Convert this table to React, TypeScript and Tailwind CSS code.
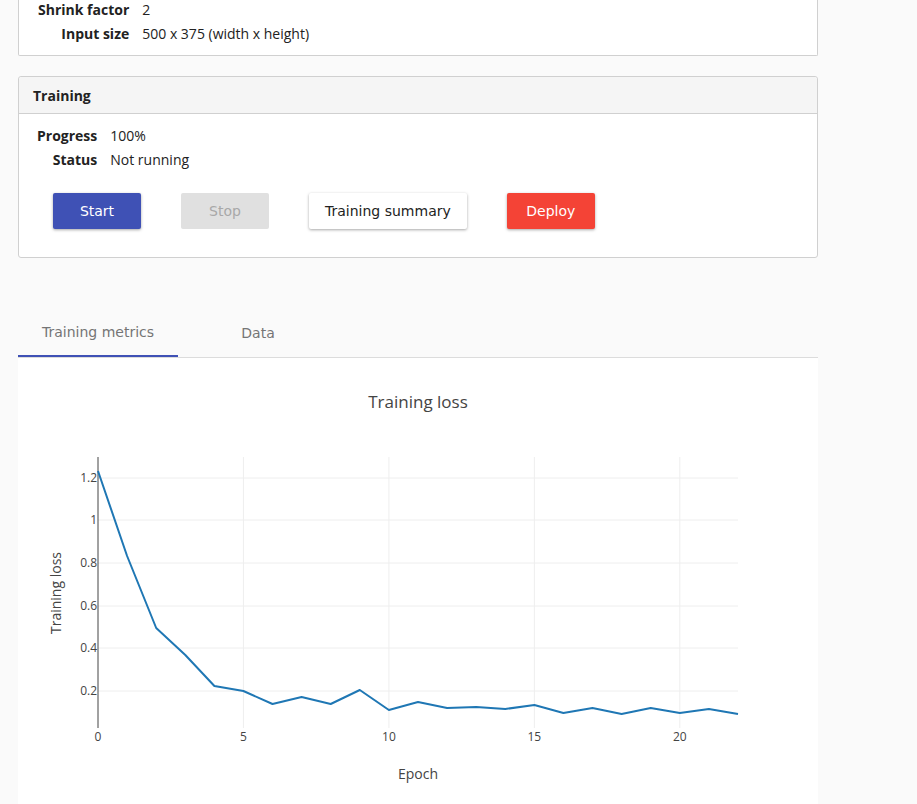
import React from "react";

const pts: [number, number][] = [
  [0, 470], [1, 555], [2, 627], [3, 654], [4, 685], [5, 690], [6, 703], [7, 696],
  [8, 703], [9, 689], [10, 709], [11, 701], [12, 707], [13, 706], [14, 708],
  [15, 704], [16, 712], [17, 707], [18, 713], [19, 707], [20, 712], [21, 708], [22, 713],
];

const OX = 18;
const OY = 357;
const xPix = (e: number) => 98 + e * 29.09;

function Chart() {
  const yTicks: [string, number][] = [
    ["1.2", 477], ["1", 519], ["0.8", 562], ["0.6", 605], ["0.4", 647], ["0.2", 690],
  ];
  const xTicks = [0, 5, 10, 15, 20];
  const path = pts
    .map(([e, y], i) => `${i === 0 ? "M" : "L"}${(xPix(e) - OX).toFixed(1)},${(y - OY).toFixed(1)}`)
    .join(" ");
  return (
    <svg width={800} height={447} className="block" style={{ fontFamily: '"Open Sans", verdana, arial, sans-serif' }}>
      <text x={418 - OX} y={407 - OY} textAnchor="middle" fontSize={17} fill="#444">
        Training loss
      </text>
      {xTicks.slice(1).map((t) => (
        <line key={t} x1={xPix(t) - OX} x2={xPix(t) - OX} y1={456 - OY} y2={727 - OY} stroke="#eee" strokeWidth={1} />
      ))}
      {yTicks.map(([l, y]) => (
        <line key={l} x1={98 - OX} x2={738 - OX} y1={y - OY} y2={y - OY} stroke="#eee" strokeWidth={1} />
      ))}
      <line x1={98 - OX} x2={98 - OX} y1={456 - OY} y2={727 - OY} stroke="#444" strokeWidth={1} />
      <path d={path} fill="none" stroke="#1f77b4" strokeWidth={2} strokeLinejoin="round" />
      {yTicks.map(([l, y]) => (
        <text key={l} x={97 - OX} y={y - OY + 4} textAnchor="end" fontSize={12} fill="#444">
          {l}
        </text>
      ))}
      {xTicks.map((t) => (
        <text key={t} x={xPix(t) - OX} y={740 - OY} textAnchor="middle" fontSize={12} fill="#444">
          {t}
        </text>
      ))}
      <text x={418 - OX} y={778 - OY} textAnchor="middle" fontSize={14} fill="#444">
        Epoch
      </text>
      <text
        x={0}
        y={0}
        textAnchor="middle"
        fontSize={14}
        fill="#444"
        transform={`translate(${61 - OX},${592 - OY}) rotate(-90)`}
      >
        Training loss
      </text>
    </svg>
  );
}

export default function App() {
  const btn = "h-9 min-w-[88px] px-4 rounded-[2px] text-[14px] flex items-center justify-center";
  return (
    <div
      className="min-h-[804px] bg-[#fafafa] pl-[18px] text-[14px] text-[#222]"
      style={{ fontFamily: '"Open Sans", sans-serif' }}
    >
      <div className="w-[800px]">
        {/* Top card */}
        <div className="bg-white border border-t-0 border-[#d0d0d0] rounded-b-[2px] pl-[19px] pb-[9px] -mt-[2px]">
          <div className="grid grid-cols-[max-content_1fr] gap-x-[13px] leading-[24px]">
            <div className="text-right font-bold">Shrink factor</div>
            <div>2</div>
            <div className="text-right font-bold">Input size</div>
            <div>500 x 375 (width x height)</div>
          </div>
        </div>

        {/* Training card */}
        <div className="mt-[20px] bg-white border border-[#d0d0d0] rounded-[3px]">
          <div className="h-[37px] bg-[#f5f5f5] border-b border-[#d0d0d0] flex items-center pl-[14px] font-bold rounded-t-[3px]">
            Training
          </div>
          <div className="pt-[10px] pb-[28px]">
            <div className="grid grid-cols-[max-content_1fr] gap-x-[13px] leading-[24px] pl-[18px]">
              <div className="text-right font-bold">Progress</div>
              <div>100%</div>
              <div className="text-right font-bold">Status</div>
              <div>Not running</div>
            </div>
            <div
              className="flex gap-10 pl-[34px] mt-[21px]"
              style={{ fontFamily: '"DejaVu Sans", sans-serif' }}
            >
              <button className={`${btn} bg-[#3f51b5] text-white shadow-[0_1px_3px_rgba(0,0,0,0.35)]`}>Start</button>
              <button className={`${btn} bg-[#e0e0e0] text-[#a8a8a8]`}>Stop</button>
              <button className={`${btn} bg-white text-[#222] shadow-[0_1px_3px_rgba(0,0,0,0.35)]`}>Training summary</button>
              <button className={`${btn} bg-[#f44336] text-white shadow-[0_1px_3px_rgba(0,0,0,0.35)]`}>Deploy</button>
            </div>
          </div>
        </div>

        {/* Tabs */}
        <div
          className="mt-[51px] flex border-b border-[#dcdcdc]"
          style={{ fontFamily: '"DejaVu Sans", sans-serif' }}
        >
          <div className="w-[160px] h-[48px] flex items-center justify-center text-[14px] text-[#757575] border-b-2 border-[#3f51b5] -mb-px">
            Training metrics
          </div>
          <div className="w-[160px] h-[48px] flex items-center justify-center text-[14px] text-[#757575]">
            Data
          </div>
        </div>

        {/* Chart panel */}
        <div className="bg-white">
          <Chart />
        </div>
      </div>
    </div>
  );
}
